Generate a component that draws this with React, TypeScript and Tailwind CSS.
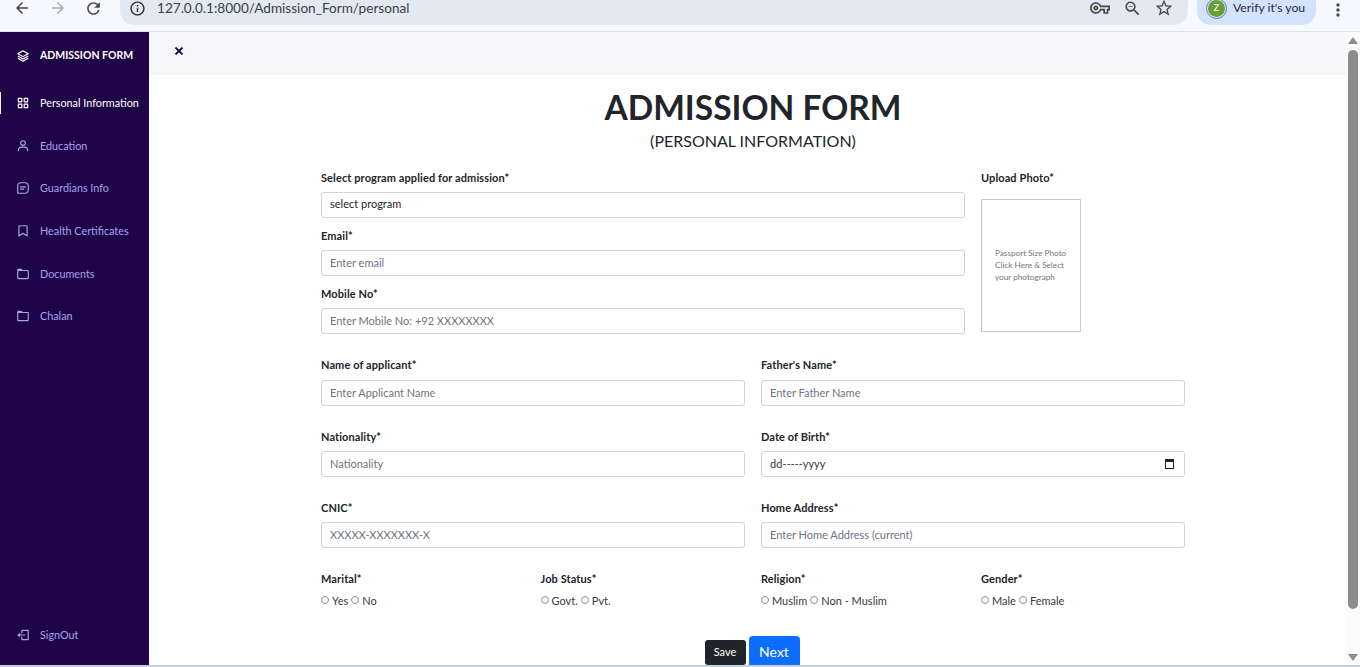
import React from 'react';
import { BiLayer, BiGridAlt, BiUser, BiMessageSquareDetail, BiBookmark, BiFolder, BiLogOut, BiX } from 'react-icons/bi';
import { MdArrowBack, MdArrowForward, MdRefresh, MdInfoOutline, MdOutlineVpnKey, MdOutlineZoomOut, MdOutlineStarBorder, MdMoreVert } from 'react-icons/md';

const navItems = [
  { label: 'Personal Information', icon: BiGridAlt, active: true },
  { label: 'Education', icon: BiUser },
  { label: 'Guardians Info', icon: BiMessageSquareDetail },
  { label: 'Health Certificates', icon: BiBookmark },
  { label: 'Documents', icon: BiFolder },
  { label: 'Chalan', icon: BiFolder },
];

const labelCls = 'block h-[14px] text-[11px] leading-[14px] font-bold tracking-[0.1px] text-[#212529]';
const inputCls = 'block h-[26px] w-full rounded-[3px] border border-[#ced4da] bg-white px-[8px] pb-[2px] text-[11px] outline-none';

function BrowserBar() {
  return (
    <div className="flex h-[32px] shrink-0 items-start border-b border-[#dfe2e8] bg-[#f8f9fe] text-[#474747]">
      <div className="flex h-[25px] w-[120px] items-center pb-[9px]">
        <MdArrowBack className="ml-[13px] h-[18px] w-[18px]" />
        <MdArrowForward className="ml-[18px] h-[18px] w-[18px] text-[#a9abae]" />
        <MdRefresh className="ml-[17px] h-[19px] w-[19px]" />
      </div>
      <div className="flex h-[25px] w-[1068px] items-center rounded-b-[14px] bg-[#e3e9f3] pb-[9px]">
        <MdInfoOutline className="ml-[9px] h-[17px] w-[17px] text-[#2d2d2d]" />
        <span className="ml-[11px] text-[13.6px] text-[#3c4043]">127.0.0.1:8000/Admission_Form/personal</span>
        <MdOutlineVpnKey className="ml-auto h-[20px] w-[20px]" />
        <MdOutlineZoomOut className="ml-[13px] h-[19px] w-[19px]" />
        <MdOutlineStarBorder className="ml-[12px] mr-[14px] h-[20px] w-[20px]" />
      </div>
      <div className="ml-[9px] flex h-[25px] w-[119px] items-center rounded-b-[14px] bg-[#d3e3fd] pb-[9px]">
        <span className="ml-[11px] flex h-[17px] w-[17px] items-center justify-center rounded-full bg-[#6a9e35] text-[9px] text-white outline outline-1 outline-offset-1 outline-[#5f84b8]">Z</span>
        <span className="ml-[8px] text-[12.2px] text-[#1f2a44]">Verify it's you</span>
      </div>
      <MdMoreVert className="ml-[12px] h-[20px] w-[20px]" />
    </div>
  );
}

function Sidebar() {
  return (
    <aside className="flex w-[149px] shrink-0 flex-col bg-[#1f0547] text-[10.8px] text-[#a5a3ee]">
      <div className="flex h-[46px] items-center pt-[1px] pl-[16px] font-bold text-white">
        <BiLayer className="h-[14px] w-[14px]" />
        <span className="ml-[10px] text-[10.5px]">ADMISSION FORM</span>
      </div>
      <nav className="mt-[4px]">
        {navItems.map((item) => {
          const Icon = item.icon;
          return (
            <a key={item.label} className={`flex h-[42.6px] items-center pl-[16px] ${item.active ? 'text-white' : ''}`}>
              {item.active && <span className="absolute left-0 h-[22px] w-px bg-white" />}
              <Icon className="h-[14px] w-[14px]" />
              <span className="ml-[10px]">{item.label}</span>
            </a>
          );
        })}
      </nav>
      <a className="mt-auto mb-[9px] flex h-[42px] items-center pl-[16px]">
        <BiLogOut className="h-[14px] w-[14px]" />
        <span className="ml-[10px]">SignOut</span>
      </a>
    </aside>
  );
}

function Field({ label, placeholder, className = '' }: { label: string; placeholder: string; className?: string }) {
  return (
    <div className={className}>
      <label className={labelCls}>{label}</label>
      <input placeholder={placeholder} className={`mt-[7px] ${inputCls} placeholder:text-[#6c757d]`} />
    </div>
  );
}

function RadioGroup({ label, options }: { label: string; options: string[] }) {
  return (
    <div>
      <label className={labelCls}>{label}</label>
      <div className="mt-[8px] flex h-[14px] items-center text-[11px] text-[#343a40]">
        {options.map((opt) => (
          <span key={opt} className="mr-[3px] flex items-center">
            <input type="radio" name={label} className="m-0 mr-[3px] h-[8px] w-[8px] -translate-y-[1px] appearance-none rounded-full border border-[#8f8f8f] bg-white" />
            {opt}
          </span>
        ))}
      </div>
    </div>
  );
}

function Scrollbar() {
  return (
    <div className="flex w-[14px] shrink-0 flex-col items-center bg-[#fbfbfb] pt-[5px]">
      <span className="h-0 w-0 border-x-[5px] border-b-[7px] border-x-transparent border-b-[#8c8c8c]" />
      <span className="mt-[6px] h-[559px] w-[10px] rounded-[5px] bg-[#8c8c8c]" />
      <span className="mt-[45px] h-0 w-0 border-x-[5px] border-t-[7px] border-x-transparent border-t-[#8c8c8c]" />
    </div>
  );
}

export default function App() {
  return (
    <div className="flex h-screen w-full flex-col overflow-hidden bg-white font-['Lato',sans-serif]">
      <BrowserBar />
      <div className="flex h-[633px] shrink-0">
        <Sidebar />
        <main className="min-w-0 flex-1 overflow-hidden">
          <div className="flex h-[43px] items-center bg-[#f6f6fb] pl-[22px] text-[#1f0547]">
            <BiX className="mb-[5px] h-[16px] w-[16px] stroke-1" />
          </div>
          <form className="ml-[172px] w-[864px]">
            <h1 className="mt-[10px] text-center text-[33.5px] leading-[44px] font-bold text-[#212529]">ADMISSION FORM</h1>
            <p className="mt-[1px] text-center text-[16px] leading-[22px] text-[#212529]">(PERSONAL INFORMATION)</p>

            <div className="mt-[19px] flex gap-[16px]">
              <div className="flex-1 space-y-[11px]">
                <div>
                  <label className={labelCls}>Select program applied for admission*</label>
                  <select className={`mt-[7px] appearance-none ${inputCls} text-[#212529]`}>
                    <option>select program</option>
                  </select>
                </div>
                <Field label="Email*" placeholder="Enter email" />
                <Field label="Mobile No*" placeholder="Enter Mobile No: +92 XXXXXXXX" />
              </div>
              <div className="w-[204px]">
                <label className={labelCls}>Upload Photo*</label>
                <div className="mt-[14px] flex h-[133px] w-[100px] items-center border border-[#c8c8c8] px-[13px] pb-[2px] text-[8.2px] leading-[12px] text-[#777]">
                  <p>Passport Size Photo Click Here &amp; Select your photograph</p>
                </div>
              </div>
            </div>

            <div className="mt-[24px] grid grid-cols-2 gap-x-[16px] gap-y-[24px]">
              <Field label="Name of applicant*" placeholder="Enter Applicant Name" className="[&>input]:mt-[8px]" />
              <Field label="Father's Name*" placeholder="Enter Father Name" className="[&>input]:mt-[8px]" />
              <Field label="Nationality*" placeholder="Nationality" />
              <div>
                <label className={labelCls}>Date of Birth*</label>
                <div className="mt-[7px] flex h-[26px] items-center justify-between rounded-[3px] border border-[#ced4da] px-[8px] text-[11px] text-[#343a40]">
                  <span>dd-----yyyy</span>
                  <svg viewBox="0 0 9 10" className="mr-[2px] h-[10px] w-[9px]" fill="none" stroke="#222">
                    <rect x="0.5" y="1.5" width="8" height="8" />
                    <rect x="0.5" y="0.5" width="8" height="2" fill="#222" />
                  </svg>
                </div>
              </div>
              <Field label="CNIC*" placeholder="XXXXX-XXXXXXX-X" />
              <Field label="Home Address*" placeholder="Enter Home Address (current)" />
            </div>

            <div className="mt-[24px] grid grid-cols-[219.5px_220.5px_220px_1fr]">
              <RadioGroup label="Marital*" options={['Yes', 'No']} />
              <RadioGroup label="Job Status*" options={['Govt.', 'Pvt.']} />
              <RadioGroup label="Religion*" options={['Muslim', 'Non - Muslim']} />
              <RadioGroup label="Gender*" options={['Male', 'Female']} />
            </div>

            <div className="mt-[26px] flex items-end justify-center gap-[3px] pr-[2px]">
              <button type="button" className="h-[25px] w-[41px] rounded-[3px] bg-[#212529] text-[11px] text-white">Save</button>
              <button type="button" className="h-[31px] w-[51px] translate-y-[2px] rounded-t-[4px] bg-[#0d6efd] pb-[1px] text-[14px] text-white">Next</button>
            </div>
          </form>
        </main>
        <Scrollbar />
      </div>
      <div className="h-[2px] shrink-0 bg-[#c5d0dc]" />
    </div>
  );
}
